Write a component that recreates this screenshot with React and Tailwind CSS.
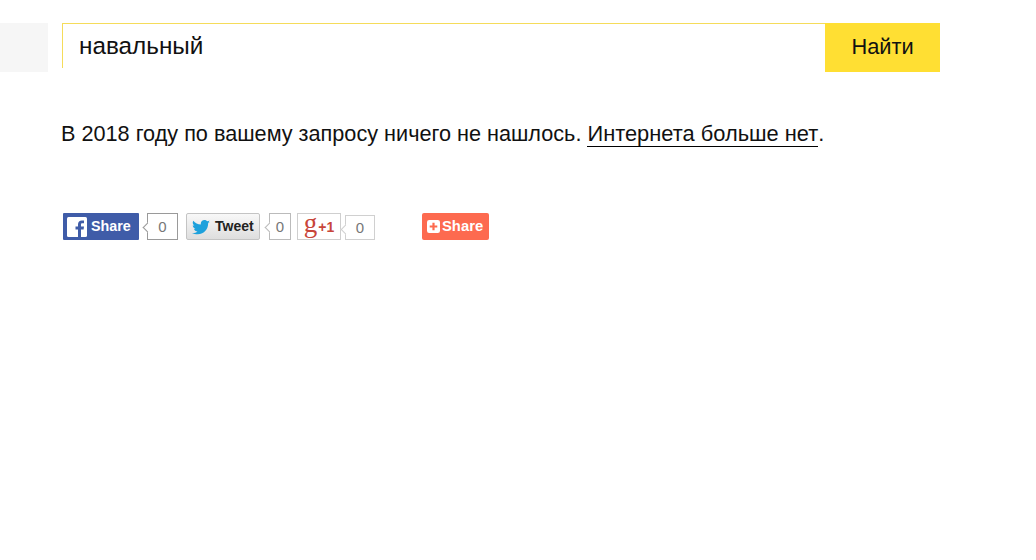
const font = { fontFamily: '"Liberation Sans", Arial, sans-serif' };

function Count({ w, h = "h-[27px]", border = "border-[#9a9a9a]", children = "0", ml = "ml-[8px]" }) {
  return (
    <div className={`relative ${ml} ${w} ${h} bg-white border ${border} flex items-center justify-center text-[15px] leading-none text-[#777]`}>
      <span className={`absolute left-[-4px] top-[10px] w-[7px] h-[7px] rotate-45 bg-white border-l border-b ${border}`} />
      <span className="relative">{children}</span>
    </div>
  );
}

export default function App() {
  return (
    <div className="w-[1036px] h-[560px] bg-white text-black overflow-hidden" style={font}>
      <div className="flex pt-[23px]">
        <div className="w-[48px] h-[49px] bg-[#f6f6f6]" />
        <div className="ml-[14px] w-[763px] h-[45px] border-t border-l border-[#f5dc5a] pl-[16px] flex items-center text-[24.300px] leading-none text-[#111]">
          навальный
        </div>
        <div className="w-[115px] h-[49px] bg-[#ffdf33] flex items-center justify-center pb-[1px] text-[21.800px] leading-none text-[#111]">
          Найти
        </div>
      </div>

      <p className="ml-[61px] mt-[49px] text-[21.660px] leading-[26px] text-[#111]">
        В 2018 году по вашему запросу ничего не нашлось.{" "}
        <span className="border-b border-black text-[21.850px]">Интернета больше нет</span>.
      </p>

      <div className="flex items-start ml-[63px] mt-[66px]">
        <div className="w-[76px] h-[27px] bg-[#3f5ca8] rounded-[1px] flex items-center pl-[4px] text-white text-[14.300px] font-bold">
          <svg width="20" height="20" viewBox="0 0 20 20" className="shrink-0">
            <rect width="20" height="20" rx="1.500" fill="#fff" />
            <path d="M14 20v-7.500h2.600l.4-3H14V7.700c0-.9.3-1.400 1.500-1.400H17V3.600c-.4 0-1.200-.1-2.200-.1-2.200 0-3.800 1.400-3.800 3.800v2.200H8.500v3H11V20z" fill="#3f5ca8" />
          </svg>
          <span className="ml-[4px]">Share</span>
        </div>
        <Count w="w-[31px]" />
        <div className="ml-[8px] w-[74px] h-[27px] bg-gradient-to-b from-[#f8f8f8] to-[#dedede] border border-[#c4c4c4] rounded-[2px] flex items-center pl-[5px] text-[#222] text-[14px] font-bold">
          <svg width="18" height="15" viewBox="0 0 24 20" className="shrink-0 mt-[2px]">
            <path d="M24 2.400c-.9.4-1.800.7-2.800.8 1-.6 1.800-1.600 2.200-2.700-1 .6-2 1-3.100 1.200C19.300.7 18 0 16.600 0c-2.700 0-4.900 2.200-4.900 4.900 0 .4 0 .8.1 1.100C7.700 5.800 4.100 3.900 1.700.9c-.4.7-.7 1.600-.7 2.500 0 1.700.9 3.200 2.200 4.100-.8 0-1.600-.2-2.200-.6v.1c0 2.400 1.700 4.400 3.900 4.800-.4.1-.8.2-1.300.2-.3 0-.6 0-.9-.1.6 2 2.400 3.400 4.600 3.400-1.700 1.300-3.800 2.100-6.100 2.100-.4 0-.8 0-1.200-.1C2.200 18.300 4.800 19 7.500 19c9.100 0 14-7.500 14-14v-.6c1-.7 1.800-1.600 2.500-2z" fill="#1da1dc" />
          </svg>
          <span className="ml-[5px]">Tweet</span>
        </div>
        <Count w="w-[22px]" ml="ml-[9px]" border="border-[#bbbbbb]" />
        <div className="ml-[6px] w-[44px] h-[27px] bg-white border border-[#cfcfcf] flex items-center justify-center text-[#c8453a]">
          <span className="text-[27px] leading-none mb-[6px]" style={{ fontFamily: '"Liberation Serif", serif' }}>g</span>
          <span className="text-[14px] leading-none ml-[1px] font-bold">+1</span>
        </div>
        <Count w="w-[30px]" h="h-[25px] mt-[2px]" ml="ml-[4px]" border="border-[#d0d0d0]" />
        <div className="ml-[47px] w-[67px] h-[27px] bg-[#fd6a4f] rounded-[2px] flex items-center pl-[5px] text-white text-[14.800px] font-bold">
          <svg width="13" height="13" viewBox="0 0 12 12" className="shrink-0">
            <rect width="12" height="12" rx="2" fill="#fff" />
            <path d="M5 2.500h2V5h2.500v2H7v2.500H5V7H2.500V5H5z" fill="#fd6a4f" />
          </svg>
          <span className="ml-[2px]">Share</span>
        </div>
      </div>
    </div>
  );
}
